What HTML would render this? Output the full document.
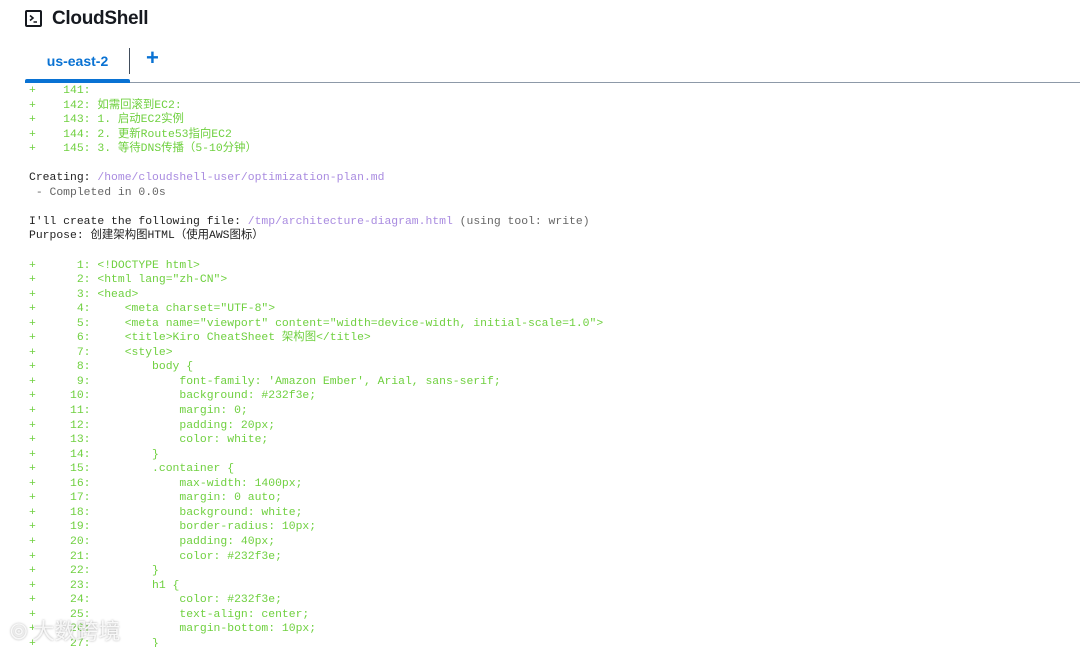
<!DOCTYPE html>
<html><head><meta charset="utf-8">
<style>
html,body{margin:0;padding:0;background:#fff;width:1080px;height:647px;overflow:hidden;font-family:"Liberation Sans","Noto Sans CJK SC",sans-serif}
.title{position:absolute;left:52px;top:8px;font-size:19px;font-weight:bold;color:#16191f;letter-spacing:-0.3px}
.icon{position:absolute;left:25px;top:10px;width:13px;height:13px;border:2px solid #16191f;border-radius:2px}
.tab{position:absolute;left:25px;top:48px;width:105px;text-align:center;font-size:14px;font-weight:bold;color:#0972d3;line-height:26px}
.ul{position:absolute;left:25px;top:79px;width:105px;height:4px;background:#0972d3;border-radius:2px 2px 0 0}
.gl{position:absolute;left:130px;top:82px;right:0;height:1px;background:#8d99a8}
.div{position:absolute;left:129px;top:48px;width:1px;height:26px;background:#414d5c}
.plus{position:absolute;left:146px;top:45px;font-size:22px;font-weight:bold;color:#0972d3;line-height:26px}
.term{position:absolute;left:0;top:85px;width:1080px;height:562px;overflow:hidden}
pre{position:absolute;left:29px;top:-1px;margin:0;font-family:"Liberation Mono","Noto Sans CJK SC",monospace;font-size:11.4px;line-height:14.55px;color:#222}
.g{color:#6fd03f}.p{color:#a98be0}.s{color:#666}
.wm{position:absolute;left:10px;top:614px;font-size:22px;color:rgba(255,255,255,.85);text-shadow:0 0 2px rgba(0,0,0,.35);font-family:"Noto Sans CJK SC",sans-serif}
</style></head><body>
<div class="icon"><svg width="13" height="13" viewBox="0 0 13 13" style="position:absolute;left:0;top:0"><path d="M3 3.5l3 2.5-3 2.5M6.5 10h3.5" stroke="#16191f" stroke-width="1.6" fill="none"/></svg></div>
<div class="title">CloudShell</div>
<div class="tab">us-east-2</div>
<div class="div"></div>
<div class="plus">+</div>
<div class="ul"></div>
<div class="gl"></div>
<div class="term"><pre><span class="g">+    141:
+    142: 如需回滚到EC2:
+    143: 1. 启动EC2实例
+    144: 2. 更新Route53指向EC2
+    145: 3. 等待DNS传播（5-10分钟）</span>

Creating: <span class="p">/home/cloudshell-user/optimization-plan.md</span>
<span class="s"> - Completed in 0.0s</span>

I'll create the following file: <span class="p">/tmp/architecture-diagram.html</span> <span class="s">(using tool: write)</span>
Purpose: 创建架构图HTML（使用AWS图标）

<span class="g">+      1: &lt;!DOCTYPE html&gt;
+      2: &lt;html lang="zh-CN"&gt;
+      3: &lt;head&gt;
+      4:     &lt;meta charset="UTF-8"&gt;
+      5:     &lt;meta name="viewport" content="width=device-width, initial-scale=1.0"&gt;
+      6:     &lt;title&gt;Kiro CheatSheet 架构图&lt;/title&gt;
+      7:     &lt;style&gt;
+      8:         body {
+      9:             font-family: 'Amazon Ember', Arial, sans-serif;
+     10:             background: #232f3e;
+     11:             margin: 0;
+     12:             padding: 20px;
+     13:             color: white;
+     14:         }
+     15:         .container {
+     16:             max-width: 1400px;
+     17:             margin: 0 auto;
+     18:             background: white;
+     19:             border-radius: 10px;
+     20:             padding: 40px;
+     21:             color: #232f3e;
+     22:         }
+     23:         h1 {
+     24:             color: #232f3e;
+     25:             text-align: center;
+     26:             margin-bottom: 10px;
+     27:         }</span></pre></div>
<div class="wm">⦾ 大数跨境</div>
</body></html>
